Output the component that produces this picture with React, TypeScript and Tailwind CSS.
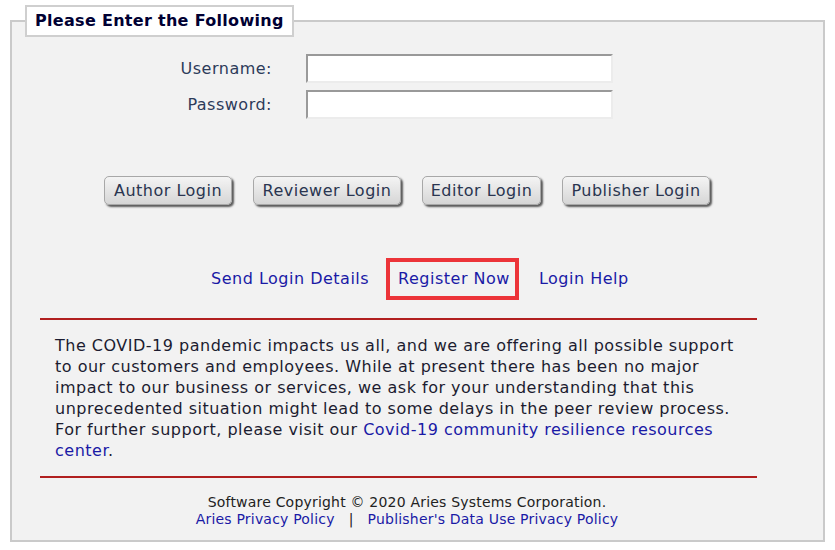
import React from 'react';

const buttons = [
  { label: 'Author Login', w: 'w-[128px]' },
  { label: 'Reviewer Login', w: 'w-[148px]' },
  { label: 'Editor Login', w: 'w-[119px]' },
  { label: 'Publisher Login', w: 'w-[148px]' },
];

export default function App() {
  return (
    <div className="w-[835px] h-[550px] bg-white pt-[5px] font-['DejaVu_Sans',Verdana,sans-serif] tracking-[0.5px]">
      <fieldset className="mx-[10px] h-[537px] border-2 border-[#cacaca] bg-[#f2f2f2]">
        <legend className="ml-[13px] border-2 border-[#cfcfcf] bg-white px-[8px] py-[4px] text-[16px] leading-[20px] font-bold text-[#000033] tracking-[0.3px]">
          Please Enter the Following
        </legend>

        {/* Login fields */}
        <div className="mt-[17px] flex flex-col gap-[7px]">
          {['Username:', 'Password:'].map((label) => (
            <div key={label} className="flex items-center">
              <label className="w-[260px] text-right text-[16px] text-[#2d3b5a]">{label}</label>
              <input
                type={label === 'Password:' ? 'password' : 'text'}
                className="ml-[34px] h-[29px] w-[307px] border-2 border-t-[#999999] border-l-[#9a9a9a] border-r-[#ececec] border-b-[#ececec] bg-white"
              />
            </div>
          ))}
        </div>

        {/* Login buttons */}
        <div className="mt-[57px] ml-[92px] flex gap-[21px]">
          {buttons.map((b) => (
            <button
              key={b.label}
              className={`${b.w} h-[29px] rounded-[5px] border border-[#a8a8a8] bg-gradient-to-b from-[#f4f4f4] to-[#d6d6d6] text-[16px] text-[#2a3550] shadow-[2px_2px_2px_#5a5a5a]`}
            >
              {b.label}
            </button>
          ))}
        </div>

        {/* Links */}
        <div className="mt-[53px] ml-[199px] flex items-center text-[16px] text-[#1a1aa6]">
          <a>Send Login Details</a>
          <a className="ml-[17px] border-4 border-[#ec3439] pl-[8px] pr-[5px] py-[7px] leading-[20px]">Register Now</a>
          <a className="ml-[20px]">Login Help</a>
        </div>

        <div className="mt-[18px] ml-[28px] w-[717px] h-[2px] bg-[#b11f1f]" />

        <p className="mt-[15px] ml-[43px] text-[16px] leading-[21px] text-[#1c1c30] whitespace-nowrap">
          The COVID-19 pandemic impacts us all, and we are offering all possible support
          <br />
          to our customers and employees. While at present there has been no major
          <br />
          impact to our business or services, we ask for your understanding that this
          <br />
          unprecedented situation might lead to some delays in the peer review process.
          <br />
          For further support, please visit our{' '}
          <a className="text-[#1a1aa6]">Covid-19 community resilience resources</a>
          <br />
          <a className="text-[#1a1aa6]">center</a>.
        </p>

        <div className="mt-[15px] ml-[28px] w-[717px] h-[2px] bg-[#b11f1f]" />

        {/* Footer */}
        <div className="mt-[16px] w-[790px] text-center text-[14px] leading-[17px] tracking-[0.2px] text-[#222222]">
          <div>Software Copyright © 2020 Aries Systems Corporation.</div>
          <div>
            <a className="text-[#1a1aa6]">Aries Privacy Policy</a>
            <span className="mx-[14px]">|</span>
            <a className="text-[#1a1aa6]">Publisher's Data Use Privacy Policy</a>
          </div>
        </div>
      </fieldset>
    </div>
  );
}
